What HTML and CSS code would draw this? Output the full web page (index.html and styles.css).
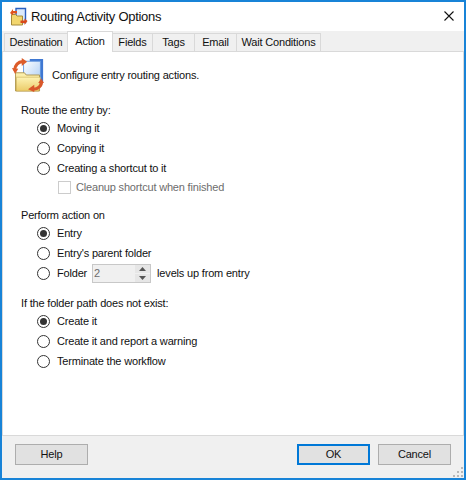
FILE: index.html
```html
<!DOCTYPE html>
<html lang="en">
    <head>
        <meta charset="utf-8" />
        <title>Routing Activity Options</title>
        <link rel="stylesheet" href="styles.css">
    </head>
    <body>
        <div class="window">
            <div class="titlebar">
                <svg class="title_icon" width="20" height="20" viewBox="0 0 20 20">
                    <path d="M7 1.500h9.500v14h-9.500z" fill="#dbe9fb" stroke="#2a5fc0" stroke-width="1.400"/>
                    <path d="M2.500 7.500h4l1.500 1.500h5.500v9h-11z" fill="#f2d66e" stroke="#a58a3a"/>
                    <path d="M1 6l3-4v2h4v2.500h-4v2z" fill="#e0521c"/>
                    <path d="M18.500 14l-3 4v-2h-4v-2.500h4v-2z" fill="#d8481a"/>
                </svg>
                <div class="title_text">Routing Activity Options</div>
                <svg class="close" width="10" height="10" viewBox="0 0 10 10">
                    <path d="M0.500 0.500l9 9M9.500 0.500l-9 9" stroke="#111" stroke-width="1.100" fill="none"/>
                </svg>
            </div>
            <div class="tabs">
                <div class="tab t_dest">Destination</div>
                <div class="tab tab_on t_action">Action</div>
                <div class="tab t_fields">Fields</div>
                <div class="tab t_tags">Tags</div>
                <div class="tab t_email">Email</div>
                <div class="tab t_wait">Wait Conditions</div>
            </div>
            <div class="panel">
                <div class="head">
                    <svg width="32" height="34" viewBox="0 0 36 38">
                        <defs>
                            <linearGradient id="fold" x1="0" y1="0" x2="0" y2="1">
                                <stop offset="0" stop-color="#fdf3b4"/>
                                <stop offset="1" stop-color="#ebcb68"/>
                            </linearGradient>
                            <linearGradient id="doc" x1="0" y1="0" x2="1" y2="1">
                                <stop offset="0" stop-color="#ffffff"/>
                                <stop offset="1" stop-color="#a9ccf5"/>
                            </linearGradient>
                        </defs>
                        <path d="M20 1h15v26h-15z" fill="#3f78d2"/>
                        <path d="M13 3.500h19v24h-19z" fill="url(#doc)" stroke="#5d93dd"/>
                        <path d="M4 16.500h10l2 2.500h15v18h-27z" fill="url(#fold)" stroke="#a98f45"/>
                        <path d="M5 21.500h27l-2 15.500h-25z" fill="url(#fold)" stroke="#c4a850" stroke-width="0.600"/>
                        <path d="M3 14c0-6 4-10 9-10" fill="none" stroke="#dd5c2a" stroke-width="3.500"/>
                        <path d="M11 0l6 4-6 5z" fill="#dd5c2a"/>
                        <path d="M0 11l3.500 7 3.500-6z" fill="#dd5c2a"/>
                        <path d="M33 26c1 5-4 9-9 9" fill="none" stroke="#d9572a" stroke-width="3.500"/>
                        <path d="M25 30l-7 5 7 3z" fill="#d9572a"/>
                        <path d="M29.500 28l3.500-5 3 5z" fill="#d9572a"/>
                    </svg>
                    <div>Configure entry routing actions.</div>
                </div>

                <div class="group_title">Route the entry by:</div>
                <div class="row"><span class="radio radio_on"></span>Moving it</div>
                <div class="row"><span class="radio"></span>Copying it</div>
                <div class="row"><span class="radio"></span>Creating a shortcut to it</div>
                <div class="row row_sub"><span class="check"></span>Cleanup shortcut when finished</div>

                <div class="group_title group_gap">Perform action on</div>
                <div class="row"><span class="radio radio_on"></span>Entry</div>
                <div class="row"><span class="radio"></span>Entry's parent folder</div>
                <div class="row">
                    <span class="radio"></span>Folder
                    <div class="spin">
                        <div class="spin_val">2</div>
                        <div class="spin_btns">
                            <div class="spin_btn"><svg width="7" height="4" viewBox="0 0 7 4"><path d="M3.500 0l3.500 4h-7z" fill="#555"/></svg></div>
                            <div class="spin_btn"><svg width="7" height="4" viewBox="0 0 7 4"><path d="M0 0h7l-3.500 4z" fill="#555"/></svg></div>
                        </div>
                    </div>
                    levels up from entry
                </div>

                <div class="group_title group_gap2">If the folder path does not exist:</div>
                <div class="row"><span class="radio radio_on"></span>Create it</div>
                <div class="row"><span class="radio"></span>Create it and report a warning</div>
                <div class="row"><span class="radio"></span>Terminate the workflow</div>
            </div>
            <div class="footer">
                <div class="But">Help</div>
                <div class="footer_right">
                    <div class="But But_default">OK</div>
                    <div class="But">Cancel</div>
                </div>
                <svg class="grip" width="12" height="12" viewBox="0 0 12 12">
                    <path d="M9 1h2v2h-2zM5 5h2v2h-2zM9 5h2v2h-2zM1 9h2v2h-2zM5 9h2v2h-2zM9 9h2v2h-2z" fill="#b8b8b8"/>
                </svg>
            </div>
        </div>
    </body>
</html>
```

FILE: styles.css
```css
* {
    box-sizing: border-box;
}
html, body {
    margin: 0;
    padding: 0;
}
body {
    width: 466px;
    height: 480px;
    overflow: hidden;
    font-family: "Liberation Sans", Arial, sans-serif;
    font-size: 11px;
    letter-spacing: -0.18px;
    color: #111;
}
.window {
    width: 466px;
    height: 480px;
    border: 2px solid #1883d7;
    background: #f0f0f0;
    display: flex;
    flex-direction: column;
}
.titlebar {
    height: 29px;
    background: white;
    display: flex;
    align-items: center;
    padding: 0 10px 0 7px;
    flex: none;
}
.title_icon {
    margin-right: 2px;
}
.title_text {
    font-size: 13px;
    letter-spacing: -0.3px;
    flex: 1;
    padding-bottom: 1px;
}
.tabs {
    height: 21px;
    flex: none;
    display: flex;
    align-items: flex-end;
    padding-left: 2px;
    margin-bottom: -1px;
    position: relative;
}
.tab {
    height: 18px;
    border: 1px solid #d9d9d9;
    border-bottom: none;
    margin-left: -1px;
    margin-bottom: 1px;
    background: #f0f0f0;
    text-align: center;
    line-height: 17px;
    white-space: nowrap;
}
.tab:first-child {
    margin-left: 0;
}
.t_dest { width: 64px; }
.t_action { width: 46px; }
.t_fields { width: 41px; }
.t_tags { width: 43px; }
.t_email { width: 43px; }
.t_wait { width: 85px; }
.tab_on {
    height: 21px;
    margin-bottom: 0;
    background: white;
    position: relative;
    z-index: 2;
    line-height: 18px;
}
.panel {
    flex: none;
    height: 385px;
    border: 1px solid #d9d9d9;
    background: white;
    padding: 6px 0 0 18px;
}
.head {
    display: flex;
    align-items: center;
    gap: 8px;
    margin-left: -9px;
    height: 34px;
    margin-bottom: 10px;
}
.group_title {
    height: 16px;
    line-height: 16px;
}
.group_gap {
    margin-top: 11px;
}
.group_gap2 {
    margin-top: 12px;
}
.row {
    height: 20px;
    display: flex;
    align-items: center;
    padding-left: 16px;
}
.row_sub {
    height: 18px;
    padding-left: 37px;
    color: #6d6d6d;
}
.radio {
    width: 13px;
    height: 13px;
    border: 1px solid #333;
    border-radius: 50%;
    background: white;
    margin-right: 7px;
    display: flex;
    align-items: center;
    justify-content: center;
}
.radio_on::before {
    content: "";
    width: 7px;
    height: 7px;
    border-radius: 50%;
    background: #333;
}
.check {
    width: 13px;
    height: 13px;
    border: 1px solid #cccccc;
    margin-right: 5px;
}
.spin {
    width: 59px;
    height: 19px;
    margin: 0 6px 0 5px;
    border: 1px solid #c8c8c8;
    background: #f0f0f0;
    display: flex;
}
.spin_val {
    flex: 1;
    padding-left: 1px;
    line-height: 17px;
    color: #6d6d6d;
}
.spin_btns {
    width: 15px;
    display: flex;
    flex-direction: column;
    gap: 1px;
    background: #f0f0f0;
}
.spin_btn {
    flex: 1;
    background: #e6e6e6;
    display: flex;
    align-items: center;
    justify-content: center;
}
.footer {
    flex: 1;
    display: flex;
    justify-content: space-between;
    padding: 8px 13px 0 13px;
    position: relative;
}
.footer_right {
    display: flex;
    gap: 8px;
}
.But {
    width: 73px;
    height: 21px;
    border: 1px solid #adadad;
    background: #e1e1e1;
    text-align: center;
    line-height: 19px;
}
.But_default {
    border: 2px solid #0078d7;
    line-height: 17px;
}
.grip {
    position: absolute;
    right: 0;
    bottom: 0;
}
.close {
    flex: none;
    margin-bottom: 2px;
}
```
